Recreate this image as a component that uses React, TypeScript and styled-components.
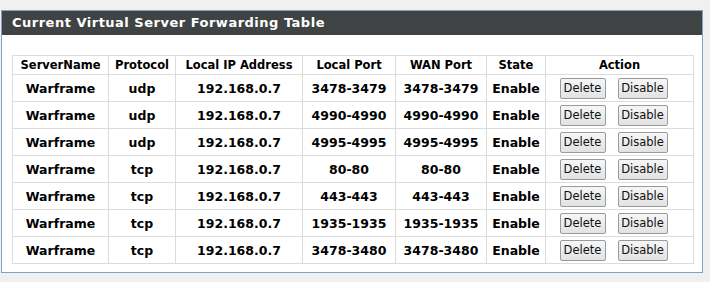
import styled, { createGlobalStyle } from "styled-components"

const GlobalStyle = createGlobalStyle`
    html, body {
        margin: 0;
        padding: 0;
        background: #f0f0f0;
    }
`

type Rule = {
    protocol: string
    localPort: string
    wanPort: string
}

const rules: Rule[] = [
    { protocol: "udp", localPort: "3478-3479", wanPort: "3478-3479" },
    { protocol: "udp", localPort: "4990-4990", wanPort: "4990-4990" },
    { protocol: "udp", localPort: "4995-4995", wanPort: "4995-4995" },
    { protocol: "tcp", localPort: "80-80", wanPort: "80-80" },
    { protocol: "tcp", localPort: "443-443", wanPort: "443-443" },
    { protocol: "tcp", localPort: "1935-1935", wanPort: "1935-1935" },
    { protocol: "tcp", localPort: "3478-3480", wanPort: "3478-3480" },
]

const columns = [
    { label: "ServerName", width: 96 },
    { label: "Protocol", width: 67 },
    { label: "Local IP Address", width: 127 },
    { label: "Local Port", width: 93 },
    { label: "WAN Port", width: 91 },
    { label: "State", width: 59 },
    { label: "Action", width: 148 },
]

const App = () => {
    return (
        <Page>
            <GlobalStyle />
            <Panel>
                <PanelTitle>Current Virtual Server Forwarding Table</PanelTitle>
                <PanelBody>
                    <Table>
                        <colgroup>
                            {columns.map((c) => (
                                <col key={c.label} style={{ width: c.width }} />
                            ))}
                        </colgroup>
                        <thead>
                            <tr>
                                {columns.map((c) => (
                                    <HeadCell key={c.label}>{c.label}</HeadCell>
                                ))}
                            </tr>
                        </thead>
                        <tbody>
                            {rules.map((r, i) => (
                                <tr key={i}>
                                    <Cell>Warframe</Cell>
                                    <Cell>{r.protocol}</Cell>
                                    <Cell>192.168.0.7</Cell>
                                    <Cell>{r.localPort}</Cell>
                                    <Cell>{r.wanPort}</Cell>
                                    <Cell>Enable</Cell>
                                    <Cell>
                                        <Actions>
                                            <Button $width={46}>Delete</Button>
                                            <Button $width={50}>Disable</Button>
                                        </Actions>
                                    </Cell>
                                </tr>
                            ))}
                        </tbody>
                    </Table>
                </PanelBody>
            </Panel>
        </Page>
    )
}

export default App

const Page = styled.div`
    padding: 10px 7px 10px 1px;
    width: 710px;
    height: 282px;
    box-sizing: border-box;
`

const Panel = styled.div`
    width: 702px;
    box-sizing: border-box;
    border: 1px solid #86a0c0;
    background: #fff;
`

const PanelTitle = styled.div`
    height: 24px;
    line-height: 24px;
    background: #404344;
    color: #fff;
    font-family: "DejaVu Sans", Verdana, sans-serif;
    font-weight: bold;
    font-size: 13px;
    letter-spacing: 0.5px;
    padding-left: 10px;
`

const PanelBody = styled.div`
    padding: 20px 9px 8px 10px;
`

const Table = styled.table`
    border-collapse: collapse;
    table-layout: fixed;
    width: 681px;
    font-family: "DejaVu Sans", Verdana, sans-serif;
    color: #000;
`

const HeadCell = styled.th`
    border: 1px solid #dcdcdc;
    height: 18px;
    padding: 0;
    font-size: 11.5px;
    font-weight: bold;
    text-align: center;
`

const Cell = styled.td`
    border: 1px solid #dcdcdc;
    height: 26px;
    padding: 0;
    font-size: 12.5px;
    font-weight: bold;
    text-align: center;
`

const Actions = styled.div`
    display: flex;
    justify-content: center;
    gap: 12px;
    padding-right: 12px;
`

const Button = styled.button<{ $width: number }>`
    width: ${(p) => p.$width}px;
    height: 21px;
    padding: 0;
    border: 1px solid #9a9a9a;
    border-radius: 2px;
    background: linear-gradient(#f6f6f6, #e2e2e2);
    font-family: "DejaVu Sans", Tahoma, sans-serif;
    font-size: 11.5px;
    color: #111;
`
